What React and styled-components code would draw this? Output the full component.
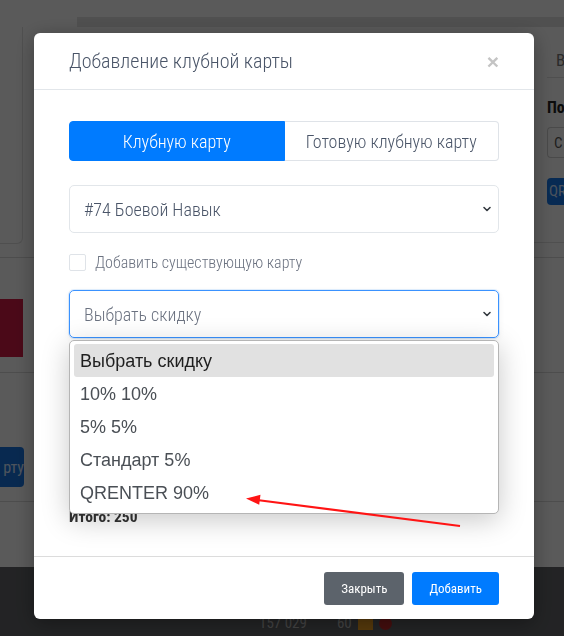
import React from 'react'
import styled, { createGlobalStyle } from 'styled-components'

const GlobalStyle = createGlobalStyle`
  html, body {
    margin: 0;
    padding: 0;
  }
  body {
    width: 564px;
    height: 636px;
    overflow: hidden;
    background: #fafafa;
    font-family: "Roboto Condensed", "Liberation Sans Narrow", Roboto, sans-serif;
  }
`

/* ---------- page behind the modal ---------- */

const Page = styled.div`
  display: flex;
  flex-direction: column;
  height: 636px;
`

const TopStrip = styled.div`
  height: 27px;
  padding: 17px 0 0 77px;
  box-sizing: border-box;
`

const TopBar = styled.div`
  height: 10px;
  background: #dedede;
`

const Band = styled.div`
  display: flex;
  justify-content: space-between;
  height: ${(p) => p.$h}px;
  border-bottom: ${(p) => (p.$plain ? 'none' : '1px solid #d6d6d6')};
  box-sizing: border-box;
`

const LeftCard = styled.div`
  width: 22px;
  height: 216px;
  border: 1px solid #dcdcdc;
  border-left: none;
  border-top: none;
  border-radius: 0 0 6px 0;
`

const RightCard = styled.div`
  width: 44px;
  height: 216px;
  box-sizing: border-box;
  padding-left: 27px;
  border-bottom: 1px solid #dcdcdc;
  display: flex;
  flex-direction: column;
  overflow: hidden;
`

const TabText = styled.div`
  margin-top: 23px;
  height: 27px;
  padding-left: 9px;
  font-size: 17px;
  color: #777;
  border-bottom: 1px solid #dcdcdc;
`

const Heading = styled.div`
  margin-top: 20px;
  font-size: 16px;
  font-weight: 700;
  color: #222;
  white-space: nowrap;
`

const MiniInput = styled.div`
  margin-top: 10px;
  height: 31px;
  border: 1px solid #ccc;
  border-right: none;
  border-radius: 4px 0 0 4px;
  font-size: 15px;
  color: #555;
  padding: 6px 0 0 6px;
  box-sizing: border-box;
`

const MiniButton = styled.div`
  margin-top: 20px;
  height: 27px;
  background: #1476e6;
  border-radius: 4px 0 0 4px;
  color: #cfe2ff;
  font-size: 15px;
  padding: 4px 0 0 2px;
  box-sizing: border-box;
  white-space: nowrap;
`

const RedBlock = styled.div`
  margin-top: 41px;
  width: 23px;
  height: 58px;
  background: #cf1b44;
`

const BlueButton = styled.div`
  margin-top: 74px;
  width: 24px;
  height: 40px;
  background: #1773de;
  border-radius: 0 4px 4px 0;
  color: #d6e6ff;
  font-size: 16px;
  display: flex;
  align-items: center;
  justify-content: flex-end;
  overflow: hidden;
`

const DarkFooter = styled.div`
  flex: 1;
  background: #616366;
  display: flex;
  align-items: flex-end;
  padding: 0 0 4px 259px;
  gap: 30px;
  color: #bbb;
  font-size: 15px;
`

const Stat = styled.div`
  display: flex;
  align-items: center;
  gap: 6px;
`

const OrangeIcon = styled.span`
  width: 15px;
  height: 13px;
  background: #f0a020;
`

const RedDot = styled.span`
  width: 13px;
  height: 13px;
  border-radius: 50%;
  background: #c02828;
`

/* ---------- modal ---------- */

const Backdrop = styled.div`
  position: fixed;
  inset: 0;
  background: rgba(0, 0, 0, 0.64);
  padding: 33px 0 0 34px;
`

const Dialog = styled.div`
  width: 500px;
  background: #fff;
  border-radius: 6px;
  box-shadow: 0 4px 20px rgba(0, 0, 0, 0.35);
`

const Header = styled.div`
  height: 56px;
  display: flex;
  align-items: center;
  justify-content: space-between;
  padding: 0 35px;
  border-bottom: 1px solid #e2e6ea;
`

const Title = styled.h5`
  margin: 0;
  font-size: 20px;
  font-weight: 300;
  color: #4a5568;
`

const Close = styled.span`
  font-family: "Liberation Sans", sans-serif;
  font-size: 21px;
  font-weight: 700;
  color: #c4c4c4;
  line-height: 1;
`

const Body = styled.div`
  padding: 31px 35px 30px;
  display: flex;
  flex-direction: column;
`

const Tabs = styled.div`
  display: flex;
  height: 40px;
`

const Tab = styled.div`
  flex: 1;
  display: flex;
  align-items: center;
  justify-content: center;
  font-size: 18px;
  font-weight: 300;
  box-sizing: border-box;
  background: ${(p) => (p.$active ? '#007bff' : '#fff')};
  color: ${(p) => (p.$active ? '#fff' : '#4a5568')};
  border: 1px solid ${(p) => (p.$active ? '#007bff' : '#dfe3e8')};
  border-left-width: ${(p) => (p.$active ? '1px' : '0')};
  border-radius: ${(p) => (p.$active ? '4px 0 0 4px' : '0 4px 4px 0')};
`

const SelectWrap = styled.div`
  position: relative;
  margin-top: ${(p) => p.$mt}px;
`

const Select = styled.div`
  height: 48px;
  box-sizing: border-box;
  border: 1px solid ${(p) => (p.$focus ? '#3a92ff' : '#e2e6ea')};
  border-radius: 5px;
  box-shadow: ${(p) => (p.$focus ? '0 0 0 1px rgba(0,123,255,0.12), 0 2px 6px rgba(0,0,0,0.06)' : 'none')};
  display: flex;
  align-items: center;
  justify-content: space-between;
  padding: 0 6px 0 14px;
  font-size: 18px;
  font-weight: 300;
  color: ${(p) => (p.$muted ? '#6b7280' : '#4a5568')};
`

const Chevron = () => (
  <svg width="10" height="10" viewBox="0 0 10 10">
    <path d="M2 3.5 L5 6.5 L8 3.5" fill="none" stroke="#343a40" strokeWidth="1.6" strokeLinecap="round" strokeLinejoin="round" />
  </svg>
)

const CheckRow = styled.label`
  display: flex;
  align-items: center;
  gap: 9px;
  margin-top: 21px;
  height: 17px;
  font-size: 16px;
  font-weight: 300;
  color: #6b7280;
`

const Box = styled.span`
  width: 15px;
  height: 15px;
  border: 1px solid #dfe3e8;
  border-radius: 2px;
`

const ApplyButton = styled.div`
  margin-top: 19px;
  width: 150px;
  height: 38px;
  background: #007bff;
  border-radius: 4px;
`

const Total = styled.div`
  margin-top: 113px;
  font-size: 15.5px;
  font-weight: 700;
  color: #333;
  height: 18px;
  line-height: 18px;
`

const Options = styled.ul`
  position: absolute;
  top: 50px;
  left: 0;
  right: 0;
  margin: 0;
  padding: 3px 4px 4px;
  list-style: none;
  background: #fff;
  border: 1px solid #b5b5b5;
  border-radius: 5px;
  box-shadow: 0 6px 28px rgba(0, 0, 0, 0.22);
  z-index: 2;
`

const Option = styled.li`
  height: 33px;
  display: flex;
  align-items: center;
  padding: 1px 0 0 6px;
  box-sizing: border-box;
  border-radius: 3px;
  font-family: "Liberation Sans", Arial, sans-serif;
  font-size: 18px;
  background: ${(p) => (p.$hl ? '#e1e1e1' : 'transparent')};
  color: ${(p) => (p.$hl ? '#1e1e1e' : '#4a4f55')};
`

const Footer = styled.div`
  display: flex;
  justify-content: flex-end;
  gap: 8px;
  padding: 15px 35px 14px;
  border-top: 1px solid #dcdcdc;
`

const Button = styled.button`
  height: 33px;
  padding: 0 17px;
  border: none;
  border-radius: 3px;
  font-family: inherit;
  font-size: 13px;
  font-weight: 400;
  color: #fff;
  background: ${(p) => (p.$variant === 'secondary' ? '#5c636b' : '#007bff')};
`

const Arrow = styled.svg`
  position: fixed;
  left: 0;
  top: 0;
  pointer-events: none;
`

const discounts = ['Выбрать скидку', '10% 10%', '5% 5%', 'Стандарт 5%', 'QRENTER 90%']

export default function App() {
  return (
    <>
      <GlobalStyle />
      <Page>
        <TopStrip>
          <TopBar />
        </TopStrip>
        <Band $h={231}>
          <LeftCard />
          <RightCard>
            <TabText>В</TabText>
            <Heading>По</Heading>
            <MiniInput>С</MiniInput>
            <MiniButton>QR</MiniButton>
          </RightCard>
        </Band>
        <Band $h={115}>
          <RedBlock />
        </Band>
        <Band $h={129}>
          <BlueButton>рту</BlueButton>
        </Band>
        <Band $h={65} $plain />
        <DarkFooter>
          <Stat>157 029</Stat>
          <Stat>
            60 <OrangeIcon /> <RedDot />
          </Stat>
        </DarkFooter>
      </Page>

      <Backdrop>
        <Dialog>
          <Header>
            <Title>Добавление клубной карты</Title>
            <Close>×</Close>
          </Header>
          <Body>
            <Tabs>
              <Tab $active>Клубную карту</Tab>
              <Tab>Готовую клубную карту</Tab>
            </Tabs>
            <SelectWrap $mt={24}>
              <Select>
                #74 Боевой Навык
                <Chevron />
              </Select>
            </SelectWrap>
            <CheckRow>
              <Box />
              Добавить существующую карту
            </CheckRow>
            <SelectWrap $mt={19}>
              <Select $focus $muted>
                Выбрать скидку
                <Chevron />
              </Select>
              <Options>
                {discounts.map((d, i) => (
                  <Option key={d} $hl={i === 0}>
                    {d}
                  </Option>
                ))}
              </Options>
            </SelectWrap>
            <ApplyButton />
            <Total>Итого: 250</Total>
          </Body>
          <Footer>
            <Button $variant="secondary">Закрыть</Button>
            <Button>Добавить</Button>
          </Footer>
        </Dialog>
      </Backdrop>

      <Arrow width="564" height="636" viewBox="0 0 564 636">
        <line x1="460" y1="526" x2="257" y2="500" stroke="#ff1414" strokeWidth="2.2" />
        <path d="M246 498.5 L260.5 494.8 L259.2 504.8 Z" fill="#ff1414" />
      </Arrow>
    </>
  )
}
